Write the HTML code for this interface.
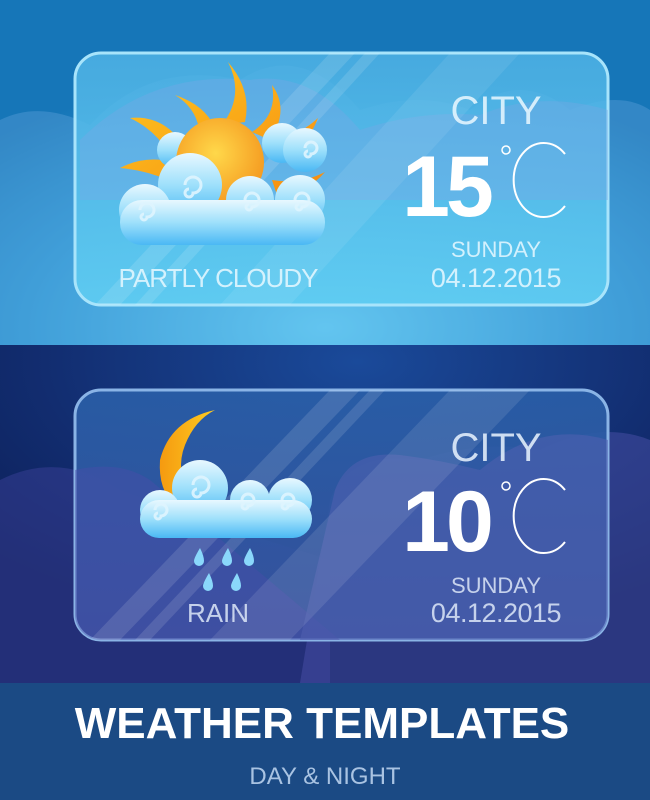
<!DOCTYPE html>
<html><head><meta charset="utf-8"><style>
html,body{margin:0;padding:0;width:650px;height:800px;overflow:hidden}
svg{display:block}
text{font-family:"Liberation Sans",sans-serif}
</style></head><body>
<svg width="650" height="800" viewBox="0 0 650 800" xmlns="http://www.w3.org/2000/svg">
<defs>
<radialGradient id="day" cx="0.5" cy="0.95" r="0.75">
<stop offset="0" stop-color="#5fd4f8"/><stop offset="0.6" stop-color="#2b9ad6"/><stop offset="1" stop-color="#1676b8"/>
</radialGradient>
<radialGradient id="night" cx="0.55" cy="0.05" r="0.8">
<stop offset="0" stop-color="#1a4a9a"/><stop offset="0.6" stop-color="#122d70"/><stop offset="1" stop-color="#0c1f58"/>
</radialGradient>
<linearGradient id="card1" x1="0" y1="0" x2="0" y2="1">
<stop offset="0" stop-color="#4fb3e6" stop-opacity="0.85"/><stop offset="1" stop-color="#5fcdf2" stop-opacity="0.9"/>
</linearGradient>
<linearGradient id="card2" x1="0" y1="0" x2="0" y2="1">
<stop offset="0" stop-color="#2a5fa8" stop-opacity="0.9"/><stop offset="1" stop-color="#36529e" stop-opacity="0.95"/>
</linearGradient>
<linearGradient id="cloud" x1="0" y1="0" x2="0" y2="1">
<stop offset="0" stop-color="#e8f8ff"/><stop offset="0.5" stop-color="#9ee0fb"/><stop offset="1" stop-color="#4ab8f4"/>
</linearGradient>
<radialGradient id="sun" cx="0.45" cy="0.4" r="0.6">
<stop offset="0" stop-color="#ffd84a"/><stop offset="1" stop-color="#f59a20"/>
</radialGradient>
<linearGradient id="ray" x1="0" y1="0" x2="1" y2="1">
<stop offset="0" stop-color="#ffc820"/><stop offset="1" stop-color="#f58a10"/>
</linearGradient>
<linearGradient id="moon" x1="0" y1="0" x2="1" y2="0">
<stop offset="0" stop-color="#f59a10"/><stop offset="1" stop-color="#ffcc20"/>
</linearGradient>
<clipPath id="c1"><rect x="75" y="53" width="533" height="252" rx="26"/></clipPath>
<clipPath id="c2"><rect x="75" y="390" width="533" height="250" rx="26"/></clipPath>
</defs>
<rect x="0" y="0" width="650" height="345" fill="url(#day)"/>
<rect x="0" y="345" width="650" height="338" fill="url(#night)"/>
<rect x="0" y="683" width="650" height="117" fill="#1b4a84"/>
<path d="M0 120 Q40 100 90 125 Q150 60 240 80 Q300 40 360 110 Q420 90 470 110 Q520 70 570 110 Q620 90 650 110 L650 345 L0 345Z" fill="#6aa8e0" opacity="0.35"/>
<path d="M0 480 Q60 450 120 490 Q200 520 330 560 L330 683 L0 683Z" fill="#3a3f98" opacity="0.5"/>
<path d="M330 500 Q350 450 420 460 Q480 440 540 450 Q600 420 650 440 L650 683 L300 683Z" fill="#4a50a8" opacity="0.5"/>
<!-- card 1 -->
<rect x="75" y="53" width="533" height="252" rx="26" fill="url(#card1)" stroke="#a8e4fb" stroke-width="3"/>
<g clip-path="url(#c1)">
<path d="M80 140 Q150 70 250 80 Q310 70 360 130 Q420 110 480 115 Q540 90 608 110 L608 200 L80 200Z" fill="#7aa6e6" opacity="0.35"/>
<path d="M330 53 L355 53 L120 305 L95 305Z" fill="#fff" opacity="0.12"/>
<path d="M365 53 L380 53 L150 305 L135 305Z" fill="#fff" opacity="0.12"/>
<path d="M450 53 L520 53 L290 305 L220 305Z" fill="#fff" opacity="0.08"/>
</g>
<g>
<path d="M175 95 Q200 110 200 140 L215 128 Q205 105 175 95Z M228 62 Q245 95 222 125 L245 122 Q252 90 228 62Z M272 85 Q278 115 252 132 L270 140 Q290 110 272 85Z M318 118 Q300 135 268 145 L285 160 Q310 140 318 118Z M120 168 Q145 155 172 162 L168 180 Q145 170 120 168Z M130 118 Q160 115 180 140 L168 152 Q155 130 130 118Z M325 172 Q300 185 272 180 L278 198 Q308 192 325 172Z" fill="url(#ray)"/>
<circle cx="282" cy="143" r="20" fill="url(#cloud)"/>
<circle cx="305" cy="150" r="22" fill="url(#cloud)"/>
<circle cx="175" cy="150" r="18" fill="url(#cloud)"/>
<circle cx="220" cy="162" r="44" fill="url(#sun)"/>
<circle cx="300" cy="200" r="25" fill="url(#cloud)"/>
<circle cx="250" cy="200" r="24" fill="url(#cloud)"/>
<circle cx="190" cy="185" r="32" fill="url(#cloud)"/>
<circle cx="145" cy="210" r="26" fill="url(#cloud)"/>
<rect x="120" y="200" width="205" height="45" rx="22" fill="url(#cloud)"/>
<g fill="none" stroke="#dff5ff" stroke-width="3" opacity="0.9">
<path d="M185 185 a8 8 0 1 1 8 8 a4 4 0 1 1 -4 -4"/><path d="M140 210 a7 7 0 1 1 7 7 a3 3 0 1 1 -3 -3"/>
<path d="M245 200 a7 7 0 1 1 7 7 a3 3 0 1 1 -3 -3"/><path d="M295 200 a7 7 0 1 1 7 7 a3 3 0 1 1 -3 -3"/>
<path d="M305 148 a6 6 0 1 1 6 6 a3 3 0 1 1 -3 -3"/>
</g>
</g>
<text x="218" y="287" font-size="26" fill="#e8f8ff" fill-opacity="0.85" text-anchor="middle" letter-spacing="-1">PARTLY CLOUDY</text>
<text x="496" y="124" font-size="40" fill="#eaf8ff" fill-opacity="0.85" text-anchor="middle">CITY</text>
<text x="446" y="216" font-size="86" fill="#fff" text-anchor="middle" font-weight="bold" letter-spacing="-4">15</text>
<circle cx="506" cy="150" r="4" fill="none" stroke="#fff" stroke-width="1.5"/>
<path d="M565 154 A30 37 0 1 0 565 206" fill="none" stroke="#fff" stroke-width="2"/>
<text x="496" y="257" font-size="22" fill="#e8f8ff" fill-opacity="0.85" text-anchor="middle">SUNDAY</text>
<text x="496" y="287" font-size="27" fill="#e8f8ff" fill-opacity="0.85" text-anchor="middle" letter-spacing="-0.5">04.12.2015</text>
<!-- card 2 -->
<rect x="75" y="390" width="533" height="250" rx="26" fill="url(#card2)" stroke="#8ab4e6" stroke-width="3"/>
<g clip-path="url(#c2)">
<path d="M75 470 Q120 460 150 480 L340 640 L75 640Z" fill="#4a4ea8" opacity="0.45"/>
<path d="M335 490 Q350 450 400 455 Q440 460 480 470 Q540 420 608 440 L608 640 L300 640Z" fill="#5060b0" opacity="0.55"/>
<path d="M330 390 L360 390 L120 640 L90 640Z" fill="#fff" opacity="0.12"/>
<path d="M370 390 L385 390 L150 640 L135 640Z" fill="#fff" opacity="0.12"/>
<path d="M450 390 L530 390 L290 640 L210 640Z" fill="#fff" opacity="0.1"/>
</g>
<path d="M215 410 Q170 420 160 460 Q158 490 175 505 L190 500 Q175 470 185 445 Q195 420 215 410Z" fill="url(#moon)"/>
<circle cx="200" cy="488" r="28" fill="url(#cloud)"/>
<circle cx="250" cy="500" r="20" fill="url(#cloud)"/>
<circle cx="290" cy="500" r="22" fill="url(#cloud)"/>
<circle cx="160" cy="510" r="20" fill="url(#cloud)"/>
<rect x="140" y="500" width="172" height="38" rx="19" fill="url(#cloud)"/>
<g fill="none" stroke="#dff5ff" stroke-width="3" opacity="0.9">
<path d="M193 485 a8 8 0 1 1 8 8 a4 4 0 1 1 -4 -4"/><path d="M155 510 a6 6 0 1 1 6 6 a3 3 0 1 1 -3 -3"/>
<path d="M242 500 a6 6 0 1 1 6 6 a3 3 0 1 1 -3 -3"/><path d="M282 500 a6 6 0 1 1 6 6 a3 3 0 1 1 -3 -3"/>
</g>
<g fill="#8ad8fb">
<path d="M200 548 q-6 10 -6 13 a5 5 0 0 0 10 0 q0 -5 -4 -13z"/>
<path d="M228 548 q-6 10 -6 13 a5 5 0 0 0 10 0 q0 -5 -4 -13z"/>
<path d="M250 548 q-6 10 -6 13 a5 5 0 0 0 10 0 q0 -5 -4 -13z"/>
<path d="M209 573 q-6 10 -6 13 a5 5 0 0 0 10 0 q0 -5 -4 -13z"/>
<path d="M237 573 q-6 10 -6 13 a5 5 0 0 0 10 0 q0 -5 -4 -13z"/>
</g>
<text x="218" y="622" font-size="26" fill="#dde8f8" fill-opacity="0.85" text-anchor="middle">RAIN</text>
<text x="496" y="461" font-size="40" fill="#eaf4ff" fill-opacity="0.85" text-anchor="middle">CITY</text>
<text x="446" y="551" font-size="86" fill="#fff" text-anchor="middle" font-weight="bold" letter-spacing="-4">10</text>
<circle cx="506" cy="486" r="4" fill="none" stroke="#fff" stroke-width="1.5"/>
<path d="M565 490 A30 37 0 1 0 565 542" fill="none" stroke="#fff" stroke-width="2"/>
<text x="496" y="593" font-size="22" fill="#dde8f8" fill-opacity="0.85" text-anchor="middle">SUNDAY</text>
<text x="496" y="622" font-size="27" fill="#dde8f8" fill-opacity="0.85" text-anchor="middle" letter-spacing="-0.5">04.12.2015</text>
<text x="322" y="738" font-size="44" fill="#fff" text-anchor="middle" font-weight="bold" letter-spacing="0">WEATHER TEMPLATES</text>
<text x="325" y="784" font-size="24" fill="#a9c3e2" text-anchor="middle">DAY &amp; NIGHT</text>
</svg>
</body></html>
